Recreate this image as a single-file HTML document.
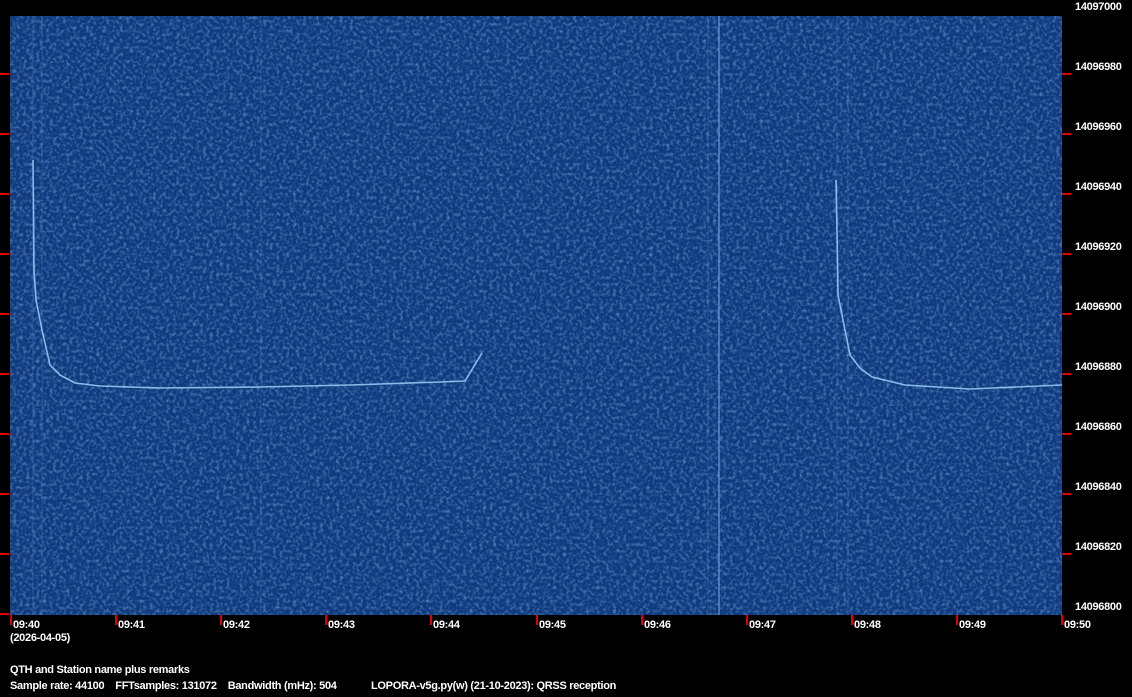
<!DOCTYPE html>
<html><head><meta charset="utf-8"><style>
html,body{margin:0;padding:0;background:#000;}
body{width:1132px;height:697px;overflow:hidden;position:relative;font-family:"Liberation Sans",sans-serif;font-weight:bold;font-size:11px;color:#fff;}
.t{position:absolute;white-space:pre;line-height:12px;letter-spacing:-0.3px;}
</style></head><body>
<svg width="1132" height="697" style="position:absolute;left:0;top:0">
<defs>
<filter id="n" x="0" y="0" width="100%" height="100%">
<feTurbulence type="fractalNoise" baseFrequency="0.3" numOctaves="2" seed="3"/>
<feColorMatrix type="matrix" values="0 0 0 0 0.18  0 0 0 0 0.42  0 0 0 0 0.75  0 0 0 1.6 -0.7"/>
</filter>
</defs>
<rect x="10" y="16" width="1052" height="599" fill="#103a7e"/>
<rect x="10" y="16" width="1052" height="599" filter="url(#n)" opacity="0.85"/>
<g stroke="#5f9fd8" fill="none">
<line x1="33" y1="16" x2="33" y2="615" stroke-width="1" opacity="0.3"/>
<line x1="42" y1="16" x2="42" y2="615" stroke-width="1" opacity="0.25"/>
<line x1="261" y1="16" x2="261" y2="615" stroke-width="1" opacity="0.2"/>
<line x1="708" y1="16" x2="708" y2="615" stroke-width="1" opacity="0.3"/>
<line x1="719" y1="16" x2="719" y2="615" stroke-width="1.5" opacity="0.8"/>
<line x1="837" y1="16" x2="837" y2="615" stroke-width="1" opacity="0.25"/>
<line x1="848" y1="16" x2="848" y2="615" stroke-width="1" opacity="0.25"/>
</g>
<g stroke="#86bdea" fill="none" stroke-width="1.6" stroke-linejoin="round">
<polyline points="33,160 34,270 36,300 42,330 50,365 60,375 75,383 100,386 160,388 260,387 350,385 440,382 465,381 482,353"/>
<polyline points="836,180 837,230 838,295 843,320 850,355 860,368 872,377 905,385 970,389 1062,385"/>
</g>
<g fill="#e00000">
<rect x="0" y="73" width="9" height="2"/><rect x="0" y="133" width="9" height="2"/><rect x="0" y="193" width="9" height="2"/><rect x="0" y="253" width="9" height="2"/><rect x="0" y="313" width="9" height="2"/><rect x="0" y="373" width="9" height="2"/><rect x="0" y="433" width="9" height="2"/><rect x="0" y="493" width="9" height="2"/><rect x="0" y="553" width="9" height="2"/><rect x="0" y="613" width="9" height="2"/>
<rect x="1062" y="73" width="9" height="2"/><rect x="1062" y="133" width="9" height="2"/><rect x="1062" y="193" width="9" height="2"/><rect x="1062" y="253" width="9" height="2"/><rect x="1062" y="313" width="9" height="2"/><rect x="1062" y="373" width="9" height="2"/><rect x="1062" y="433" width="9" height="2"/><rect x="1062" y="493" width="9" height="2"/><rect x="1062" y="553" width="9" height="2"/>
<rect x="10" y="615" width="2" height="10"/><rect x="115" y="615" width="2" height="10"/><rect x="220" y="615" width="2" height="10"/><rect x="325" y="615" width="2" height="10"/><rect x="430" y="615" width="2" height="10"/><rect x="536" y="615" width="2" height="10"/><rect x="641" y="615" width="2" height="10"/><rect x="746" y="615" width="2" height="10"/><rect x="851" y="615" width="2" height="10"/><rect x="956" y="615" width="2" height="10"/><rect x="1061" y="615" width="2" height="10"/>
</g>
</svg>
<div class="t" style="left:1075px;top:1px">14097000</div>
<div class="t" style="left:1075px;top:61px">14096980</div>
<div class="t" style="left:1075px;top:121px">14096960</div>
<div class="t" style="left:1075px;top:181px">14096940</div>
<div class="t" style="left:1075px;top:241px">14096920</div>
<div class="t" style="left:1075px;top:301px">14096900</div>
<div class="t" style="left:1075px;top:361px">14096880</div>
<div class="t" style="left:1075px;top:421px">14096860</div>
<div class="t" style="left:1075px;top:481px">14096840</div>
<div class="t" style="left:1075px;top:541px">14096820</div>
<div class="t" style="left:1075px;top:601px">14096800</div>
<div class="t" style="left:13px;top:619px">09:40</div>
<div class="t" style="left:118px;top:619px">09:41</div>
<div class="t" style="left:223px;top:619px">09:42</div>
<div class="t" style="left:328px;top:619px">09:43</div>
<div class="t" style="left:433px;top:619px">09:44</div>
<div class="t" style="left:539px;top:619px">09:45</div>
<div class="t" style="left:644px;top:619px">09:46</div>
<div class="t" style="left:749px;top:619px">09:47</div>
<div class="t" style="left:854px;top:619px">09:48</div>
<div class="t" style="left:959px;top:619px">09:49</div>
<div class="t" style="left:1064px;top:619px">09:50</div>
<div class="t" style="left:10px;top:632px">(2026-04-05)</div>
<div class="t" style="left:10px;top:664px">QTH and Station name plus remarks</div>
<div class="t" style="left:10px;top:680px">Sample rate: 44100    FFTsamples: 131072    Bandwidth (mHz): 504</div>
<div class="t" style="left:371px;top:680px">LOPORA-v5g.py(w) (21-10-2023): QRSS reception</div>
</body></html>
